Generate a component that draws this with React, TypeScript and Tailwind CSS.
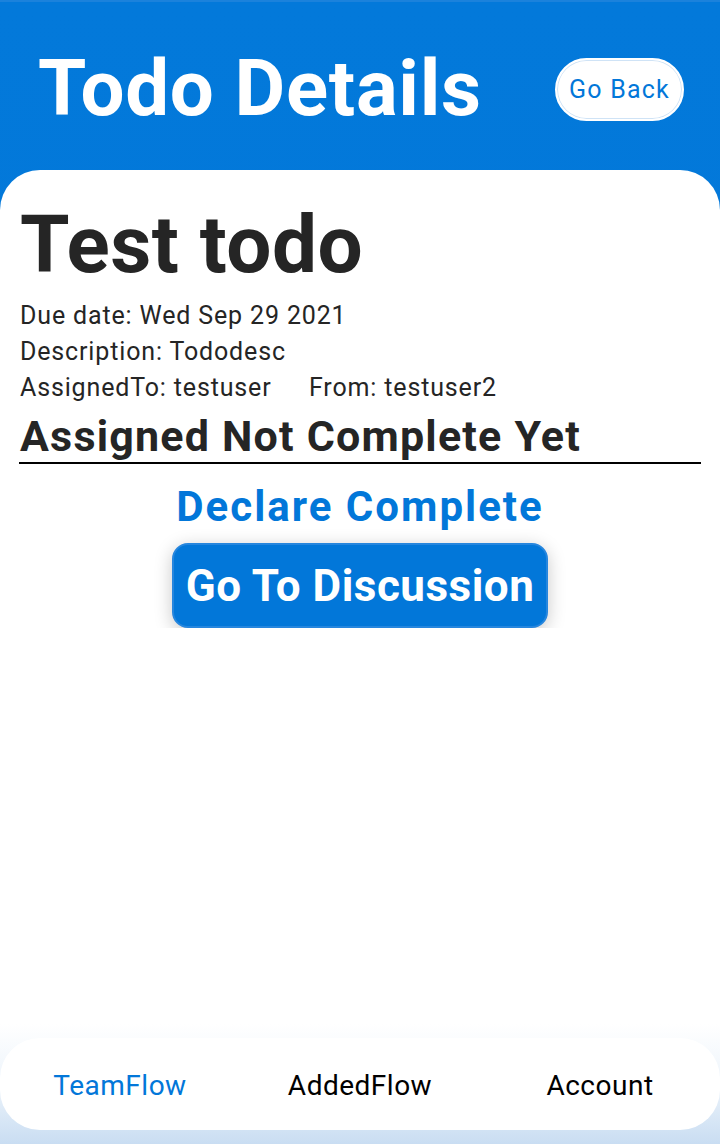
import React from "react";

const font = { fontFamily: "Roboto, 'Noto Sans', sans-serif" };

export default function App() {
  return (
    <div
      className="h-[1144px] w-full flex flex-col bg-gradient-to-b from-[#0379da] via-[#0277d9] to-[#026ecb] border-t-2 border-[#1b82dc]"
      style={font}
    >
      {/* Header */}
      <header className="h-[168px] shrink-0 flex items-center justify-between pl-[38px] pr-[36px] pt-[6px]">
        <h1 className="text-[78px] leading-none font-bold text-white tracking-[0.7px]">
          Todo Details
        </h1>
        <button className="h-[63px] w-[129px] rounded-full bg-white border-2 border-white ring-1 ring-inset ring-[#cfe3f6] text-[#0277d9] text-[25px] leading-none tracking-[1.2px] flex items-center justify-center">
          Go Back
        </button>
      </header>

      {/* Card */}
      <main className="flex-1 flex flex-col bg-white rounded-t-[40px] overflow-hidden">
        <section className="overflow-hidden px-[19px] pt-[35px] flex flex-col text-[#252525]">
          <h2 className="text-[80px] leading-none font-bold pl-[1px] tracking-[0.5px]">Test todo</h2>
          <div className="mt-[13px] text-[25px] leading-[36px] tracking-[0.85px] pl-[1px]">
            <p>Due date: Wed Sep 29 2021</p>
            <p>Description: Tododesc</p>
            <p className="flex">
              <span className="w-[289px]">AssignedTo: testuser</span>
              <span>From: testuser2</span>
            </p>
          </div>
          <h3 className="mt-[9px] pb-[4px] border-b-2 border-black text-[43px] leading-none font-bold tracking-[1.2px] pl-[1px]">
            Assigned Not Complete Yet
          </h3>
          <button className="mt-[22px] self-center text-[42px] leading-none font-bold tracking-[2px] text-[#0277d9]">
            Declare Complete
          </button>
          <button className="mt-[15px] mb-0 self-center h-[85px] px-[12px] rounded-[16px] bg-[#0277d9] border-2 border-[#2686de] shadow-[0_4px_18px_rgba(0,0,0,0.22)] text-white text-[44px] leading-none font-bold tracking-[0.5px] flex items-center">
            Go To Discussion
          </button>
        </section>

        <div className="flex-1" />

        {/* Bottom nav */}
        <footer className="pt-[14px] pb-[14px] bg-gradient-to-b from-white via-[#edf4fb] to-[#c9ddf2]">
          <nav className="h-[92px] pt-[4px] bg-white rounded-[40px] grid grid-cols-3 items-center text-[28px] leading-none tracking-[0.5px]">
            <a className="text-center text-[#0277d9]">TeamFlow</a>
            <a className="text-center text-black">AddedFlow</a>
            <a className="text-center text-black">Account</a>
          </nav>
        </footer>
      </main>
    </div>
  );
}
